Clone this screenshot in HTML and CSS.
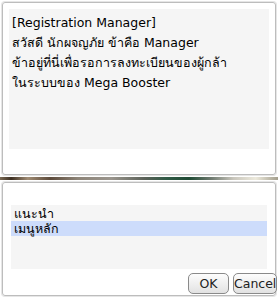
FILE: index.html
```html
<!DOCTYPE html>
<html lang="th">
<head>
  <meta charset="UTF-8">
  <title>Registration Manager</title>
  <link rel="stylesheet" href="styles.css">
</head>
<body>
  <div id="dialog">
    <!-- ข้อความ NPC -->
    <div class="panel panel-top">
      <div class="talk">
        <p>[Registration Manager]</p>
        <p>สวัสดี นักผจญภัย ข้าคือ Manager</p>
        <p>ข้าอยู่ที่นี่เพื่อรอการลงทะเบียนของผู้กล้า</p>
        <p>ในระบบของ Mega Booster</p>
      </div>
    </div>
    <div class="divider"></div>
    <!-- ตัวเลือก -->
    <div class="panel panel-bottom">
      <ul class="menu">
        <li>แนะนำ</li>
        <li class="selected">เมนูหลัก</li>
      </ul>
      <div class="buttons">
        <button class="btn btn-ok">OK</button>
        <button class="btn btn-cancel">Cancel</button>
      </div>
    </div>
  </div>
</body>
</html>
```

FILE: styles.css
```css
html, body {
  margin: 0;
  padding: 0;
  background: #fff;
}
body {
  width: 278px;
  height: 298px;
  overflow: hidden;
  font-family: Tahoma, "DejaVu Sans", "Noto Sans", sans-serif;
  font-size: 12.5px;
  color: #000;
}
#dialog {
  display: flex;
  flex-direction: column;
  padding-top: 2px;
}
/* กรอบ */
.panel {
  margin: 0 2px;
  border: 1px solid #bdbdbd;
  border-radius: 3px;
  box-shadow: 0 0 0 1px #e6e6e6;
}
.panel-top {
  height: 146px;
  padding: 6px 6px 19px 6px;
}
.talk {
  height: 140px;
  padding: 4px 0 0 3px;
  box-sizing: border-box;
  background: #f5f5f5;
}
.talk p {
  margin: 0;
  height: 20px;
  line-height: 20px;
  white-space: nowrap;
}
/* เส้นคั่น */
.divider {
  height: 3px;
  margin: 2px 0 2px 0;
  background: linear-gradient(to right,
    #7a6a55 0%, #3d2f22 4%, #a08c74 10%, #5c4a3a 18%, #8d8478 28%,
    #9a958d 40%, #5b6158 52%, #2f5a45 60%, #1f4a33 68%, #6f7a70 76%,
    #c9c6bc 84%, #ece9dc 92%, #a39e8c 100%);
}
.panel-bottom {
  height: 90px;
  padding: 22px 0 0 8px;
  display: flex;
  flex-direction: column;
}
.menu {
  list-style: none;
  margin: 0;
  padding: 1px 0 0 0;
  width: 256px;
  height: 64px;
  box-sizing: border-box;
  background: #f5f5f5;
}
.menu li {
  height: 15px;
  line-height: 15px;
  padding-left: 3px;
}
.menu li.selected {
  background: #cddcfb;
}
/* ปุ่ม */
.buttons {
  display: flex;
  justify-content: flex-end;
  gap: 4px;
  margin: 4px -2px 0 0;
}
.btn {
  height: 21px;
  padding: 0;
  border: 1px solid #8a8a8a;
  border-radius: 5px;
  background: linear-gradient(#fdfdfd, #e2e2e2);
  font-family: Tahoma, "DejaVu Sans", sans-serif;
  font-size: 12.5px;
  color: #222;
}
.btn-ok {
  width: 41px;
}
.btn-cancel {
  width: 44px;
}
```
